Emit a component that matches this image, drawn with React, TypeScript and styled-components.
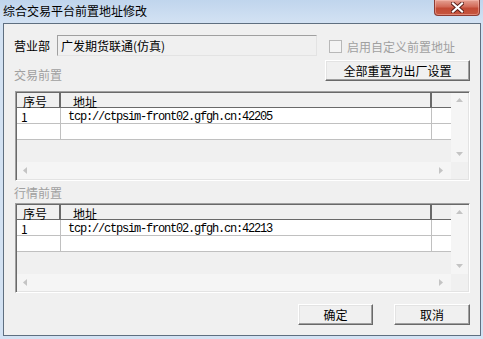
import React from 'react'
import styled, { createGlobalStyle } from 'styled-components'

const GlobalStyle = createGlobalStyle`
  html, body {
    margin: 0;
    padding: 0;
    background: #d3e2f3;
  }
  body {
    font-family: "Noto Sans CJK SC", "Liberation Sans", sans-serif;
    font-size: 12px;
    color: #000;
  }
`

const StyledWindow = styled.div`
  width: 483px;
  height: 339px;
  display: flex;
  flex-direction: column;
  background: linear-gradient(to bottom, #c0d5ed 0px, #d3e2f3 23px, #d3e2f3 100%);
  overflow: hidden;
`

const StyledTitleBar = styled.div`
  height: 23px;
  display: flex;
  align-items: flex-start;
  justify-content: space-between;
  padding-left: 3px;
  padding-right: 3px;
`

const StyledTitle = styled.div`
  margin-top: 4px;
  line-height: 13px;
  font-size: 12px;
  color: #000;
`

const StyledClose = styled.div`
  width: 46px;
  height: 16px;
  box-sizing: border-box;
  border: 1px solid #8c3b33;
  border-top: none;
  border-radius: 0 0 4px 4px;
  background: linear-gradient(to bottom, #e5a193 0%, #d26a58 45%, #c24a35 55%, #c6563f 100%);
  box-shadow: inset 0 0 0 1px rgba(255, 200, 190, 0.45);
  display: flex;
  align-items: center;
  justify-content: center;
`

const StyledClient = styled.div`
  margin: 0 2px 3px 3px;
  height: 313px;
  box-sizing: border-box;
  border: 1px solid #5f6f80;
  background: #f0f0f0;
  padding: 0 10px;
  display: flex;
  flex-direction: column;
`

const StyledTopRow = styled.div`
  margin-top: 11px;
  height: 21px;
  display: flex;
  align-items: center;
`

const StyledLabel = styled.div<{ $disabled?: boolean }>`
  line-height: 12px;
  white-space: nowrap;
  color: ${(p) => (p.$disabled ? '#a0a0a0' : '#000')};
`

const StyledFieldLabel = styled(StyledLabel)`
  width: 43px;
`

const StyledInput = styled.div`
  width: 260px;
  height: 21px;
  box-sizing: border-box;
  border: 1px solid;
  border-color: #a0a0a0 #e3e3e3 #e3e3e3 #a0a0a0;
  background: #f0f0f0;
  padding-left: 3px;
  line-height: 18px;
  display: flex;
  align-items: center;
`

const StyledCheckWrap = styled.label`
  margin-left: 12px;
  margin-top: 2px;
  display: flex;
  align-items: center;
  gap: 5px;
  color: #a0a0a0;
`

const StyledCheckbox = styled.span`
  width: 13px;
  height: 13px;
  box-sizing: border-box;
  border: 1px solid #b8b8b8;
  background: #f4f4f4;
`

const StyledSecondRow = styled.div`
  margin-top: 4px;
  height: 21px;
  display: flex;
  align-items: flex-end;
  justify-content: space-between;
`

const StyledButton = styled.button<{ $width: number }>`
  width: ${(p) => p.$width}px;
  height: 21px;
  box-sizing: border-box;
  padding: 0;
  margin: 0;
  border: 1px solid;
  border-color: #fff #696969 #696969 #fff;
  box-shadow: inset -1px -1px 0 #a0a0a0, inset 1px 1px 0 #e3e3e3;
  background: #f0f0f0;
  font-family: "Noto Sans CJK SC", "Liberation Sans", sans-serif;
  font-size: 12px;
  line-height: 18px;
  color: #000;
`

const StyledTable = styled.div<{ $gap: number }>`
  margin-top: ${(p) => p.$gap}px;
  margin-left: 1px;
  width: 455px;
  height: 90px;
  flex-shrink: 0;
  box-sizing: border-box;
  border: 1px solid;
  border-color: #a0a0a0 #fff #fff #a0a0a0;
  box-shadow: inset 1px 1px 0 #696969, inset -1px -1px 0 #e3e3e3;
  padding: 1px;
  display: grid;
  grid-template-columns: 1fr 17px;
  grid-template-rows: 1fr 17px;
  background: #f0f0f0;
`

const StyledList = styled.div`
  overflow: hidden;
  background: #f0f0f0;
`

const StyledRow = styled.div<{ $header?: boolean }>`
  display: grid;
  grid-template-columns: 44px 371px 20px;
  height: ${(p) => (p.$header ? 15 : 16)}px;
  box-sizing: border-box;
  background: ${(p) => (p.$header ? '#f0f0f0' : '#fff')};
  border-bottom: 1px solid ${(p) => (p.$header ? '#696969' : '#c0c0c0')};
  box-shadow: ${(p) => (p.$header ? '0 1px 0 #a0a0a0' : 'none')};
  position: relative;
`

const StyledCell = styled.div<{ $header?: boolean; $mono?: boolean; $last?: boolean; $pad: number }>`
  box-sizing: border-box;
  display: flex;
  align-items: center;
  padding-left: ${(p) => p.$pad}px;
  white-space: nowrap;
  border-right: ${(p) =>
    p.$last ? 'none' : p.$header ? '2px solid #696969' : '1px solid #c0c0c0'};
  font-family: ${(p) =>
    p.$mono ? '"Liberation Mono", "DejaVu Sans Mono", monospace' : 'inherit'};
  letter-spacing: ${(p) => (p.$mono ? '-1.2px' : '0')};
`

const StyledVScroll = styled.div`
  background: #f5f5f5;
  display: flex;
  flex-direction: column;
  justify-content: space-between;
  align-items: center;
  padding: 5px 0 6px;
`

const StyledHScroll = styled.div`
  background: #f5f5f5;
  display: flex;
  justify-content: space-between;
  align-items: center;
  padding: 0 8px 0 6px;
`

const StyledCorner = styled.div`
  background: #f0f0f0;
`

const StyledSectionLabel = styled(StyledLabel)`
  margin-top: 6px;
  height: 12px;
`

const StyledFooter = styled.div`
  margin-top: 11px;
  display: flex;
  justify-content: flex-end;
  gap: 21px;
`

const Arrow: React.FC<{ dir: 'up' | 'down' | 'left' | 'right' }> = ({ dir }) => {
  const pts = {
    up: '0,4 7,4 3.5,0',
    down: '0,0 7,0 3.5,4',
    left: '4,0 4,7 0,3.5',
    right: '0,0 0,7 4,3.5',
  }[dir]
  const vertical = dir === 'up' || dir === 'down'
  return (
    <svg width={vertical ? 7 : 4} height={vertical ? 4 : 7}>
      <polygon points={pts} fill="#c4c4c4" />
    </svg>
  )
}

interface Entry {
  id: string
  address: string
}

const AddressTable: React.FC<{ rows: Entry[]; gap: number }> = ({ rows, gap }) => (
  <StyledTable $gap={gap}>
    <StyledList>
      <StyledRow $header>
        <StyledCell $header $pad={6}>序号</StyledCell>
        <StyledCell $header $pad={12}>地址</StyledCell>
        <StyledCell $header $last $pad={0} />
      </StyledRow>
      {rows.map((r, i) => (
        <StyledRow key={i}>
          <StyledCell $pad={4}>{r.id}</StyledCell>
          <StyledCell $mono $pad={7}>{r.address}</StyledCell>
          <StyledCell $last $pad={0} />
        </StyledRow>
      ))}
    </StyledList>
    <StyledVScroll>
      <Arrow dir="up" />
      <Arrow dir="down" />
    </StyledVScroll>
    <StyledHScroll>
      <Arrow dir="left" />
      <Arrow dir="right" />
    </StyledHScroll>
    <StyledCorner />
  </StyledTable>
)

const App: React.FC = () => {
  return (
    <>
      <GlobalStyle />
      <StyledWindow>
        <StyledTitleBar>
          <StyledTitle>综合交易平台前置地址修改</StyledTitle>
          <StyledClose>
            <svg width="13" height="11" viewBox="0 0 13 11">
              <path d="M2 1.5 L11 9.5 M11 1.5 L2 9.5" stroke="#5a1e18" strokeWidth="4" strokeLinecap="square" />
              <path d="M2 1.5 L11 9.5 M11 1.5 L2 9.5" stroke="#fff" strokeWidth="2.2" strokeLinecap="square" />
            </svg>
          </StyledClose>
        </StyledTitleBar>
        <StyledClient>
          <StyledTopRow>
            <StyledFieldLabel>营业部</StyledFieldLabel>
            <StyledInput>广发期货联通(仿真)</StyledInput>
            <StyledCheckWrap>
              <StyledCheckbox />
              启用自定义前置地址
            </StyledCheckWrap>
          </StyledTopRow>
          <StyledSecondRow>
            <StyledLabel $disabled>交易前置</StyledLabel>
            <StyledButton $width={145}>全部重置为出厂设置</StyledButton>
          </StyledSecondRow>
          <AddressTable gap={10} rows={[{ id: '1', address: 'tcp://ctpsim-front02.gfgh.cn:42205' }, { id: '', address: '' }]} />
          <StyledSectionLabel $disabled>行情前置</StyledSectionLabel>
          <AddressTable gap={4} rows={[{ id: '1', address: 'tcp://ctpsim-front02.gfgh.cn:42213' }, { id: '', address: '' }]} />
          <StyledFooter>
            <StyledButton $width={75}>确定</StyledButton>
            <StyledButton $width={76}>取消</StyledButton>
          </StyledFooter>
        </StyledClient>
      </StyledWindow>
    </>
  )
}

export default App
